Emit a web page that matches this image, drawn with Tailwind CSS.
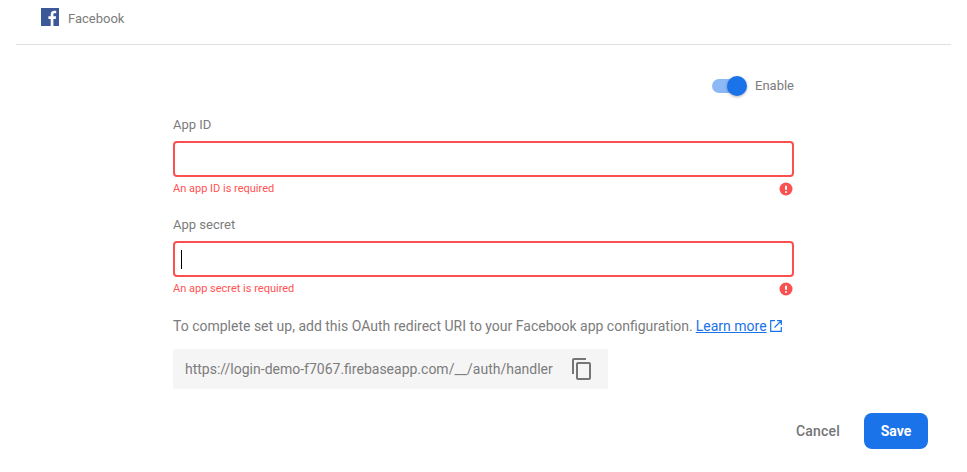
<!DOCTYPE html>
<html lang="en">
<head>
    <meta charset="UTF-8">
    <title>Facebook sign-in provider</title>
    <script src="https://cdn.jsdelivr.net/npm/@tailwindcss/browser@4"></script>
</head>
<body class="bg-white font-['Roboto',sans-serif] text-[#7c7c7c] h-[472px] overflow-hidden">
    <div class="mx-[16px] h-[45px] border-b border-[#e0e0e0] flex items-start pl-[25px] pt-[8px]">
        <svg class="w-[18px] h-[18px]" viewBox="0 0 18 18">
            <rect width="18" height="18" fill="#3b5998"/>
            <path d="M12.4 18v-7h2.3l.4-2.7h-2.7V6.600c0-.8.2-1.300 1.400-1.300h1.400V2.900c-.3 0-1.100-.1-2-.1-2.100 0-3.500 1.300-3.500 3.600v1.900H7.400V11h2.300v7z" fill="#fff"/>
        </svg>
        <span class="ml-[9px] mt-[1px] text-[13px] leading-[20px]">Facebook</span>
    </div>

    <div class="w-[621px] ml-[173px]">
        <div class="flex justify-end items-center h-[24px] mt-[29px]">
            <div class="relative w-[34px] h-[14px] mr-[8px]">
                <div class="w-[32px] h-[14px] rounded-full bg-[#8cb8f6]"></div>
                <div class="absolute right-[-1px] top-[-3px] w-[20px] h-[20px] rounded-full bg-[#1a73e8] shadow-[0_1px_3px_rgba(0,0,0,0.3)]"></div>
            </div>
            <span class="text-[13px] ml-[1px]">Enable</span>
        </div>

        <label class="block text-[13px] leading-[16px] mt-[19px]">App ID</label>
        <div class="mt-[8px] h-[36px] border-2 border-[#fb5050] rounded-[4px]"></div>
        <div class="flex justify-between items-center mt-[4px] h-[16px] pr-[1px]">
            <span class="text-[11px] text-[#ff5252]">An app ID is required</span>
            <svg class="w-[14px] h-[14px]" viewBox="0 0 14 14"><circle cx="7" cy="7" r="6.500" fill="#fb5050"/><rect x="6" y="3.500" width="2" height="4.500" rx="1" fill="#fff"/><circle cx="7" cy="10" r="1" fill="#fff"/></svg>
        </div>

        <label class="block text-[13px] leading-[16px] mt-[20px]">App secret</label>
        <div class="mt-[8px] h-[36px] border-2 border-[#fb5050] rounded-[4px] flex items-center pl-[6px]">
            <div class="w-[1px] h-[19px] bg-black"></div>
        </div>
        <div class="flex justify-between items-center mt-[4px] h-[16px] pr-[1px]">
            <span class="text-[11px] text-[#ff5252]">An app secret is required</span>
            <svg class="w-[14px] h-[14px]" viewBox="0 0 14 14"><circle cx="7" cy="7" r="6.500" fill="#fb5050"/><rect x="6" y="3.500" width="2" height="4.500" rx="1" fill="#fff"/><circle cx="7" cy="10" r="1" fill="#fff"/></svg>
        </div>

        <p class="flex items-center text-[14px] leading-[20px] mt-[19px] whitespace-nowrap">
            <span>To complete set up, add this OAuth redirect URI to your Facebook app configuration.</span>
            <a class="ml-[3px] text-[#1a73e8] underline">Learn more</a>
            <svg class="w-[12px] h-[12px] ml-[3px]" viewBox="0 0 12 12" fill="none" stroke="#1a73e8" stroke-width="1.200"><path d="M5 .7H.7v10.600h10.600V7M7 .7h4.300V5M11 1 4.500 7.500"/></svg>
        </p>

        <div class="mt-[13px] w-[435px] h-[40px] bg-[#f5f5f5] rounded-[2px] flex items-center pl-[12px]">
            <span class="text-[14px] w-[386px] whitespace-nowrap">https://login-demo-f7067.firebaseapp.com/__/auth/handler</span>
            <svg class="w-[24px] h-[24px] ml-[-1px]" viewBox="0 0 24 24" fill="#757575"><path d="M16 1H4c-1.100 0-2 .9-2 2v14h2V3h12V1zm3 4H8c-1.100 0-2 .9-2 2v14c0 1.100.9 2 2 2h11c1.100 0 2-.9 2-2V7c0-1.100-.9-2-2-2zm0 16H8V7h11v14z"/></svg>
        </div>
    </div>

    <div class="flex justify-end items-center mt-[24px] mr-[39px]">
        <button class="text-[14px] font-medium text-[#757575] mr-[24px] tracking-[0.2px]">Cancel</button>
        <button class="w-[64px] h-[36px] rounded-[8px] bg-[#1a73e8] text-white text-[14px] font-bold">Save</button>
    </div>
</body>
</html>
